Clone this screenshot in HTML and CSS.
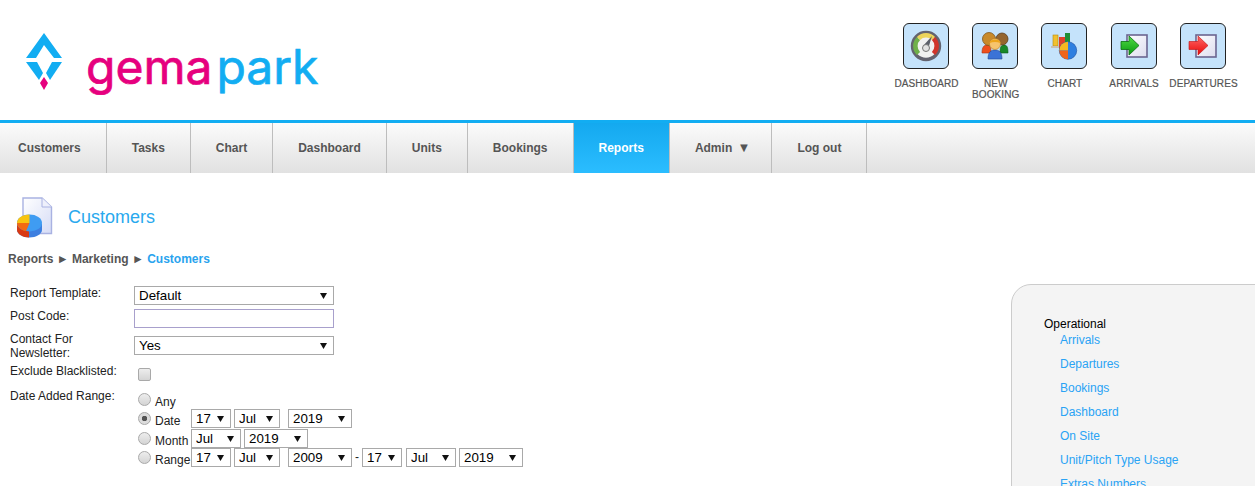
FILE: index.html
```html
<!DOCTYPE html>
<html lang="en">
<head>
<meta charset="utf-8">
<title>Customers</title>
<link rel="stylesheet" href="styles.css">
</head>
<body>
<header class="top">
  <div class="brand">
    <svg class="mark" width="40" height="60" viewBox="0 0 40 60" aria-hidden="true">
      <polygon fill="#12adf2" points="19,2 37,27 29,27 19,14 11,27 1,27"/>
      <polygon fill="#12adf2" points="1,31 12,31 18,42 14,49"/>
      <polygon fill="#12adf2" points="37,31 27,31 21,42 25,49"/>
      <polygon fill="#e6007e" points="19,46 23,52 19,59 15,52"/>
    </svg>
    <div class="word"><span class="pink">gema</span><span class="blue">park</span></div>
  </div>
  <nav class="quick">
    <a class="quick-item" href="#">
      <span class="tile">
        <svg width="44" height="44" viewBox="0 0 44 44">
          <circle cx="22" cy="22" r="13.5" fill="#f1f1f1" stroke="#63636f" stroke-width="3.4"/>
          <path d="M14.500 29.500A10.500 10.500 0 0 1 14.500 14.500" fill="none" stroke="#6fb04a" stroke-width="4.500"/>
          <path d="M14.500 14.500A10.500 10.500 0 0 1 29.500 14.500" fill="none" stroke="#ecd45a" stroke-width="4.500"/>
          <path d="M29.500 14.500A10.500 10.500 0 0 1 29.500 29.500" fill="none" stroke="#d0352b" stroke-width="4.500"/>
          <polygon points="28,12 24,25 19,22" fill="#5c606a"/>
          <circle cx="22" cy="24" r="3.5" fill="#e2e2e2" stroke="#777" stroke-width="1"/>
        </svg>
      </span>
      <span class="quick-label">Dashboard</span>
    </a>
    <a class="quick-item" href="#">
      <span class="tile">
        <svg width="44" height="44" viewBox="0 0 44 44">
          <path d="M9 29C9 23 11 21 14 21C17 21 18 23 18 29Z" fill="#ee4f1c" stroke="#a83010" stroke-width=".6"/>
          <path d="M27 29C27 23 28 21 31 21C34 21 35 23 35 29Z" fill="#17882a" stroke="#0c5c18" stroke-width=".6"/>
          <circle cx="16" cy="15" r="6.500" fill="#c98a2a" stroke="#80551a" stroke-width=".8"/>
          <circle cx="29" cy="15" r="6" fill="#94652f" stroke="#5e3d1a" stroke-width=".8"/>
          <path d="M15 35C15 28 18 26 22 26C26 26 29 28 29 35Z" fill="#3b73d6" stroke="#234a94" stroke-width=".6"/>
          <circle cx="22" cy="20" r="5.500" fill="#f6c46e" stroke="#b47a20" stroke-width=".6"/>
          <path d="M16.500 19C17 14.500 27 14 27.500 19C24 17.500 20 17.500 16.500 19Z" fill="#eda51c"/>
        </svg>
      </span>
      <span class="quick-label">New Booking</span>
    </a>
    <a class="quick-item" href="#">
      <span class="tile">
        <svg width="44" height="44" viewBox="0 0 44 44">
          <rect x="11" y="11" width="5" height="11" fill="#f0c030" stroke="#b58a10" stroke-width=".6"/>
          <rect x="9" y="22" width="9" height="2" fill="#c8c0b4"/>
          <rect x="17" y="13" width="6" height="12" fill="#e0402a"/>
          <rect x="23" y="9" width="5" height="10" fill="#1e8f36"/>
          <circle cx="26" cy="26.500" r="8.700" fill="#2f7fe0" stroke="#2a5aa8" stroke-width=".7"/>
          <path d="M26 26.500V17.800A8.700 8.700 0 0 0 17.300 26.500Z" fill="#f6b820"/>
          <path d="M26 26.500H17.300A8.700 8.700 0 0 0 26 35.200Z" fill="#f0641c"/>
        </svg>
      </span>
      <span class="quick-label">Chart</span>
    </a>
    <a class="quick-item" href="#">
      <span class="tile">
        <svg width="44" height="44" viewBox="0 0 44 44">
          <defs><linearGradient id="pa" x1="0" y1="0" x2="1" y2="1"><stop offset="0" stop-color="#fff"/><stop offset="1" stop-color="#dcdcee"/></linearGradient>
          <linearGradient id="ga" x1="0" y1="0" x2="0" y2="1"><stop offset="0" stop-color="#52dc48"/><stop offset="1" stop-color="#089a10"/></linearGradient></defs>
          <rect x="15" y="11" width="20" height="22" fill="url(#pa)" stroke="#6b6590" stroke-width="1.6"/>
          <path d="M9 17.500H17V12L27 21.500L17 31V25.500H9Z" fill="url(#ga)" stroke="#0c6e14" stroke-width=".8"/>
        </svg>
      </span>
      <span class="quick-label">Arrivals</span>
    </a>
    <a class="quick-item" href="#">
      <span class="tile">
        <svg width="44" height="44" viewBox="0 0 44 44">
          <defs><linearGradient id="pd" x1="0" y1="0" x2="1" y2="1"><stop offset="0" stop-color="#fff"/><stop offset="1" stop-color="#dcdcee"/></linearGradient>
          <linearGradient id="gd" x1="0" y1="0" x2="0" y2="1"><stop offset="0" stop-color="#ff6a6a"/><stop offset="1" stop-color="#e80808"/></linearGradient></defs>
          <rect x="15" y="11" width="20" height="22" fill="url(#pd)" stroke="#6b6590" stroke-width="1.6"/>
          <path d="M8 17.500H17V12L27 21.500L17 31V25.500H8Z" fill="url(#gd)" stroke="#c01010" stroke-width=".6"/>
        </svg>
      </span>
      <span class="quick-label">Departures</span>
    </a>
  </nav>
</header>

<nav class="menu">
  <a class="menu-item first" href="#">Customers</a>
  <a class="menu-item" href="#">Tasks</a>
  <a class="menu-item" href="#">Chart</a>
  <a class="menu-item" href="#">Dashboard</a>
  <a class="menu-item" href="#">Units</a>
  <a class="menu-item" href="#">Bookings</a>
  <a class="menu-item active" href="#">Reports</a>
  <a class="menu-item admin" href="#">Admin <span class="caret">▼</span></a>
  <a class="menu-item" href="#">Log out</a>
</nav>

<div class="title-row">
  <svg class="title-icon" width="38" height="42" viewBox="0 0 38 42" aria-hidden="true">
    <defs><linearGradient id="doc" x1="0" y1="0" x2="1" y2="1"><stop offset="0" stop-color="#fff"/><stop offset="1" stop-color="#d6dcf6"/></linearGradient></defs>
    <path d="M8 1H27L36.500 10V36.500H8Z" fill="url(#doc)" stroke="#a9b2e2" stroke-width="1.400"/>
    <path d="M27 1V10H36.500" fill="#eef0fb" stroke="#a9b2e2" stroke-width="1"/>
    <path d="M2 27V33C2 37 8 40.500 14.500 40.500C21 40.500 27 37 27 33V27Z" fill="#3d7fe0"/>
    <path d="M2 27V33C2 37 8 40.500 14 40.500V27Z" fill="#d93a14"/>
    <ellipse cx="14.500" cy="26" rx="12.500" ry="8.500" fill="#3f9cf2"/>
    <path d="M14.500 26V17.500C7.500 17.500 2 21 2 26Z" fill="#f8c410"/>
    <path d="M14.500 26H2C2 29 5 33 11 34.200Z" fill="#f26a12"/>
  </svg>
  <h1 class="title">Customers</h1>
</div>

<div class="crumbs">Reports <span class="sep">►</span> Marketing <span class="sep">►</span> <span class="here">Customers</span></div>

<main class="content">
  <form class="form">
    <div class="row r1">
      <label class="lab">Report Template:</label>
      <select class="wide"><option>Default</option></select>
    </div>
    <div class="row r2">
      <label class="lab">Post Code:</label>
      <input class="text" type="text">
    </div>
    <div class="row r3">
      <label class="lab">Contact For Newsletter:</label>
      <select class="wide"><option>Yes</option></select>
    </div>
    <div class="row r4">
      <label class="lab">Exclude Blacklisted:</label>
      <input class="check" type="checkbox">
    </div>
    <div class="row r5">
      <label class="lab">Date Added Range:</label>
      <div class="ranges">
        <div class="opt any"><label class="radio"><input type="radio" name="d"><span>Any</span></label></div>
        <div class="opt date"><label class="radio"><input type="radio" name="d" checked><span>Date</span></label>
          <select class="d"><option>17</option></select>
          <select class="m"><option>Jul</option></select>
          <select class="y gap"><option>2019</option></select>
        </div>
        <div class="opt month"><label class="radio"><input type="radio" name="d"><span>Month</span></label>
          <select class="m2"><option>Jul</option></select>
          <select class="y2"><option>2019</option></select>
        </div>
        <div class="opt range"><label class="radio"><input type="radio" name="d"><span>Range</span></label>
          <select class="d"><option>17</option></select>
          <select class="m"><option>Jul</option></select>
          <select class="y gap"><option>2009</option></select>
          <span class="dash">-</span>
          <select class="d d2"><option>17</option></select>
          <select class="m3"><option>Jul</option></select>
          <select class="y"><option>2019</option></select>
        </div>
      </div>
    </div>
  </form>
  <aside class="side">
    <div class="side-head">Operational</div>
    <ul class="side-list">
      <li><a href="#">Arrivals</a></li>
      <li><a href="#">Departures</a></li>
      <li><a href="#">Bookings</a></li>
      <li><a href="#">Dashboard</a></li>
      <li><a href="#">On Site</a></li>
      <li><a href="#">Unit/Pitch Type Usage</a></li>
      <li><a href="#">Extras Numbers</a></li>
    </ul>
  </aside>
</main>
</body>
</html>
```
FILE: styles.css
```css
* { box-sizing: border-box; }
html, body { margin: 0; padding: 0; }
body {
  height: 100vh;
  overflow: hidden;
  background: #fff;
  color: #222;
  font: 12px/14px "Liberation Sans", Arial, sans-serif;
}
a { text-decoration: none; }

/* header */
.top {
  height: 123px;
  border-bottom: 3px solid #12adf2;
  display: flex;
  justify-content: space-between;
}
.brand { display: flex; padding: 31px 0 0 25px; }
.mark { flex: none; }
.word {
  margin: 12px 0 0 21px;
  font: 400 48px/1 Inter, sans-serif;
  height: 48px;
  -webkit-text-stroke: 0.7px currentColor;
}
.pink { color: #e6007e; margin-right: 4px; }
.blue { color: #12adf2; }

.quick { display: flex; padding: 23px 17.6px 0 0; }
.quick-item {
  width: 69.2px;
  display: flex;
  flex-direction: column;
  align-items: center;
  color: #555;
}
.tile {
  width: 46px;
  height: 46px;
  flex: none;
  background: #c5e3fb;
  border: 1px solid #222;
  border-radius: 6px;
}
.tile svg { display: block; }
.quick-label {
  margin-top: 9px;
  width: 69px;
  padding-left: 1px;
  font-size: 10px;
  line-height: 11px;
  text-align: center;
  text-transform: uppercase;
  letter-spacing: 0.1px;
  word-spacing: 30px;
  -webkit-text-stroke: 0.2px currentColor;
}

/* main menu */
.menu {
  height: 50px;
  display: flex;
  background: linear-gradient(#fbfbfb, #e1e1e1);
}
.menu-item {
  padding: 0 25px;
  line-height: 50px;
  font-weight: 700;
  color: #555;
  border-right: 1px solid #bdbdbd;
}
.menu-item.first { padding-left: 18px; }
.menu-item.active {
  color: #fff;
  background: linear-gradient(#14a9ef, #2bbdff);
}
.menu-item.admin { padding-right: 21px; }
.caret { font-size: 13px; margin-left: 2px; }

/* title */
.title-row {
  display: flex;
  align-items: center;
  height: 42px;
  margin-top: 24px;
  padding-left: 15px;
}
.title-icon { flex: none; }
.title {
  margin: -2px 0 0 15px;
  font-size: 18px;
  line-height: 22px;
  font-weight: 400;
  color: #29a9ee;
}
.crumbs {
  margin: 13px 0 0 8px;
  font-weight: 700;
  color: #555;
}
.sep { font-weight: 400; font-size: 12px; }
.here { color: #29a3ee; }

/* form */
.content {
  display: flex;
  justify-content: space-between;
  margin-top: 19px;
}
.form { width: 560px; padding: 1px 0 0 10px; color: #222; }
.row { display: flex; align-items: flex-start; }
.lab { width: 124px; flex: none; }
.r1 { height: 23px; }
.r2 { height: 23px; }
.r3 { height: 32px; }
.r4 { height: 25px; }
select {
  appearance: none;
  height: 19px;
  padding: 0 0 0 4px;
  font: 13.33px "Liberation Sans", Arial, sans-serif;
  color: #000;
  background: #fff url("data:image/svg+xml,%3Csvg xmlns='http://www.w3.org/2000/svg' width='7' height='6'%3E%3Cpath d='M0 0H7L3.500 6Z' fill='%23111'/%3E%3C/svg%3E") no-repeat right 6px center;
  border: 1px solid #a9a9a9;
  border-radius: 0;
}
.wide { width: 200px; }
.r3 .wide { margin-top: 4px; }
.text {
  width: 200px;
  height: 19px;
  margin: 0;
  background: #fff;
  border: 1px solid #a8a0cc;
  border-radius: 0;
  padding: 0;
}
.check, .radio input {
  appearance: none;
  width: 13px;
  height: 13px;
  flex: none;
  background: linear-gradient(#ededed, #d4d4d4);
  border: 1px solid #a9a9a9;
}
.check { margin: 4px 0 0 4px; border-radius: 2px; }
.ranges { margin: 1px 0 0 4px; }
.opt { display: flex; align-items: flex-start; }
.any { height: 19px; }
.date { height: 20px; }
.month { height: 19px; }
.range { height: 19px; }
.radio { width: 53px; flex: none; display: flex; white-space: nowrap; }
.radio input { margin: 3px 4px 0 0; border-radius: 50%; }
.radio input:checked { background: radial-gradient(circle, #555 0, #555 2.5px, #dcdcdc 3px); }
.radio span { margin-top: 5px; }
.opt select { margin-right: 3px; }
.d { width: 40px; }
.m { width: 46px; }
.y { width: 64px; }
.m2 { width: 50px; }
.y2 { width: 64px; }
.m3 { width: 50px; }
.opt .gap { margin-left: 5px; margin-right: 0; }
.opt .d2 { margin-right: 4px; }
.dash { width: 10px; text-align: center; line-height: 19px; }

/* side panel */
.side {
  width: 264px;
  height: 400px;
  margin: -1px -20px 0 0;
  padding: 32px 0 0 32px;
  background: #f4f4f4;
  border: 1px solid #ccc;
  border-radius: 20px 0 0 0;
  color: #000;
}
.side-list { list-style: none; margin: 2px 0 0; padding: 0 0 0 16px; }
.side-list li { height: 24px; }
.side-list a { color: #29a3f5; }
```
